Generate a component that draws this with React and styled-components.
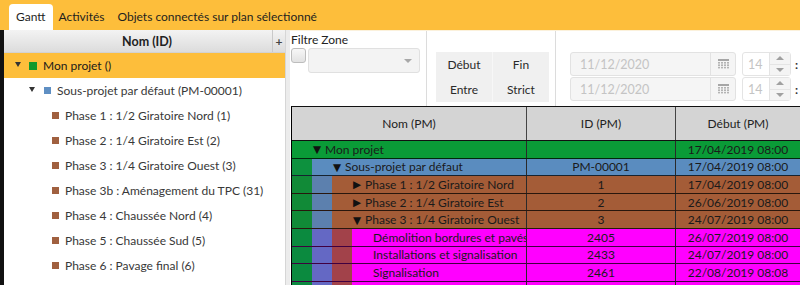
import React from 'react';
import styled, { createGlobalStyle } from 'styled-components';

const GlobalStyle = createGlobalStyle`
  html, body { margin: 0; padding: 0; background: #fff; }
  body { font-family: Lato, "Noto Sans", sans-serif; font-size: 12px; color: #222; }
`;

const Screen = styled.div`
  width: 800px;
  height: 285px;
  overflow: hidden;
  display: flex;
  flex-direction: column;
`;

const TabBar = styled.div`
  height: 30px;
  flex-shrink: 0;
  background: #fdbe3b;
  display: flex;
  align-items: flex-end;
  padding-left: 9px;
  box-sizing: border-box;
`;

const Tab = styled.div`
  height: 26px;
  padding: ${p => (p.$active ? '0 7px' : '0 7px 0 6px')};
  display: flex;
  align-items: center;
  padding-bottom: 1px;
  box-sizing: border-box;
  font-size: 12px;
  color: #1e1e1e;
  border-radius: 4px 4px 0 0;
  background: ${p => (p.$active ? '#fff' : 'transparent')};
`;

const Main = styled.div`
  flex: 1;
  min-height: 0;
  display: flex;
`;

const EdgeStrip = styled.div`
  width: 4px;
  background: #111;
`;

const TreePanel = styled.div`
  width: 281px;
  display: flex;
  flex-direction: column;
  background: #fff;
`;

const TreeHeader = styled.div`
  height: 23px;
  flex-shrink: 0;
  display: flex;
  box-sizing: border-box;
  background: linear-gradient(#f3f3f3, #dcdcdc);
  border-bottom: 1px solid #d2d2d2;
`;

const TreeTitle = styled.div`
  flex: 1;
  display: flex;
  align-items: center;
  justify-content: center;
  padding-left: 18px;
  font-weight: 700;
  font-size: 12.5px;
  color: #222;
`;

const AddCell = styled.div`
  width: 12px;
  border-left: 1px solid #c9c9c9;
  display: flex;
  align-items: center;
  justify-content: center;
  font-weight: 700;
  font-size: 12px;
  color: #444;
`;

const TreeRow = styled.div`
  height: 25px;
  flex-shrink: 0;
  display: flex;
  align-items: center;
  white-space: nowrap;
  padding-left: ${p => p.$indent}px;
  background: ${p => (p.$selected ? '#fdbe3b' : 'transparent')};
  font-size: 12px;
  color: ${p => (p.$selected ? '#1a1a1a' : '#383838')};
`;

const Caret = styled.span`
  width: 0;
  height: 0;
  border-left: 3.5px solid transparent;
  border-right: 3.5px solid transparent;
  border-top: 5px solid #333;
  margin-right: ${p => p.$gap}px;
  margin-top: -2px;
`;

const Swatch = styled.span`
  width: ${p => p.$size}px;
  height: ${p => p.$size}px;
  background: ${p => p.$color};
  margin-right: 6px;
  flex-shrink: 0;
`;

const Splitter = styled.div`
  width: 5px;
  background: #ececec;
  border-left: 1px solid #d6d6d6;
  box-sizing: border-box;
`;

const RightPanel = styled.div`
  flex: 1;
  min-width: 0;
  display: flex;
  flex-direction: column;
`;

const Toolbar = styled.div`
  height: 76px;
  flex-shrink: 0;
  display: flex;
  box-sizing: border-box;
  border-top: 1px solid #fbf1dc;
`;

const ZoneSection = styled.div`
  width: 137px;
  box-sizing: border-box;
  padding: 1px 0 0 1px;
  border-right: 1px solid #dcdcdc;
`;

const ZoneLabel = styled.div`
  font-size: 12px;
  line-height: 16px;
  color: #222;
`;

const ZoneRow = styled.div`
  display: flex;
  gap: 2px;
`;

const CheckBox = styled.div`
  width: 15px;
  height: 15px;
  box-sizing: border-box;
  border: 1px solid #bdbdbd;
  border-radius: 3px;
  background: linear-gradient(#f7f7f7, #e2e2e2);
`;

const Combo = styled.div`
  width: 112px;
  height: 25px;
  box-sizing: border-box;
  border: 1px solid #e0e0e0;
  border-radius: 3px;
  background: #f3f3f3;
  display: flex;
  align-items: center;
  justify-content: flex-end;
  padding-right: 7px;
`;

const DownArrow = styled.span`
  width: 0;
  height: 0;
  border-left: 4px solid transparent;
  border-right: 4px solid transparent;
  border-top: 4px solid #a8a8a8;
`;

const ModeSection = styled.div`
  width: 129px;
  box-sizing: border-box;
  padding: 21px 0 0 9px;
  border-right: 1px solid #dcdcdc;
`;

const ModeGrid = styled.div`
  width: 113px;
  display: grid;
  grid-template-columns: 56px 56px;
  grid-auto-rows: 25px;
  gap: 0 1px;
  background: #f7f7f7;
`;

const ModeButton = styled.div`
  background: #f0f0f0;
  display: flex;
  align-items: center;
  justify-content: center;
  font-size: 12px;
  color: #2a2a2a;
`;

const DateSection = styled.div`
  flex: 1;
  padding: 21px 0 0 14px;
  display: flex;
  flex-direction: column;
  gap: 1px;
`;

const DateRow = styled.div`
  display: flex;
  align-items: center;
  height: 24px;
`;

const DateInput = styled.div`
  width: 166px;
  height: 24px;
  box-sizing: border-box;
  border: 1px solid #e2e2e2;
  border-radius: 3px;
  background: #f5f5f5;
  display: flex;
`;

const DateText = styled.div`
  flex: 1;
  display: flex;
  align-items: center;
  padding-left: 9px;
  font-size: 12.5px;
  color: #c4c4c4;
`;

const CalButton = styled.div`
  width: 24px;
  border-left: 1px solid #e2e2e2;
  display: flex;
  align-items: center;
  justify-content: center;
`;

const Spinner = styled.div`
  width: 49px;
  height: 24px;
  margin-left: 6px;
  box-sizing: border-box;
  border: 1px solid #e4e4e4;
  border-radius: 3px;
  background: #fff;
  display: flex;
`;

const SpinValue = styled.div`
  flex: 1;
  display: flex;
  align-items: center;
  padding-left: 5px;
  font-size: 12.5px;
  color: #c4c4c4;
`;

const SpinArrows = styled.div`
  width: 20px;
  display: flex;
  flex-direction: column;
  background: #f4f4f4;
  border-left: 1px solid #e4e4e4;
`;

const SpinHalf = styled.div`
  flex: 1;
  display: flex;
  align-items: center;
  justify-content: center;
  border-bottom: ${p => (p.$top ? '1px solid #e4e4e4' : 'none')};
`;

const SpinTri = styled.span`
  width: 0;
  height: 0;
  border-left: 4px solid transparent;
  border-right: 4px solid transparent;
  ${p => (p.$up ? 'border-bottom: 4px solid #a0a0a0;' : 'border-top: 4px solid #a0a0a0;')}
`;

const Colon = styled.span`
  margin-left: 4px;
  font-size: 12px;
  font-weight: 700;
  color: #333;
`;

const Grid = styled.div`
  flex: 1;
  margin-left: 1px;
  border-left: 1px solid #000;
  border-top: 1px solid #111;
  overflow: hidden;
`;

const columns = '235px 149px 1fr';

const HeaderRow = styled.div`
  height: 33px;
  display: grid;
  grid-template-columns: ${columns};
  background: #d4d4d4;
  border-bottom: 1px solid #111;
`;

const HeaderCell = styled.div`
  display: flex;
  align-items: center;
  justify-content: center;
  font-size: 12px;
  color: #222;
  border-right: ${p => (p.$last ? 'none' : '1px solid #444')};
`;

const Row = styled.div`
  height: 17.6px;
  box-sizing: border-box;
  display: grid;
  grid-template-columns: ${columns};
  background: ${p => p.$bg};
  border-bottom: 1px solid rgba(0, 0, 0, 0.75);
`;

const NameCell = styled.div`
  display: flex;
  align-items: stretch;
  border-right: 1px solid #2a2a2a;
  overflow: hidden;
  white-space: nowrap;
`;

const Slot = styled.div`
  width: 20px;
  flex-shrink: 0;
  background: ${p => p.$color};
`;

const NameText = styled.div`
  display: flex;
  align-items: center;
  padding-left: 1px;
  font-size: 12px;
  color: #1a1a1a;
`;

const Toggle = styled.span`
  font-family: "DejaVu Sans", sans-serif;
  font-size: 10.5px;
  margin-right: 4px;
  color: #111;
`;

const DataCell = styled.div`
  display: flex;
  align-items: center;
  justify-content: center;
  font-size: 12px;
  color: #1a1a1a;
  border-right: ${p => (p.$last ? 'none' : '1px solid #2a2a2a')};
  white-space: nowrap;
`;

const GREEN = '#0a9b37';
const BLUE = '#5a8cbf';
const BROWN = '#a45c37';
const MAGENTA = '#ff00ff';

const treeItems = [
  { label: 'Mon projet ()', color: '#13992b', indent: 11, caret: true, size: 8, selected: true },
  { label: 'Sous-projet par défaut (PM-00001)', color: '#5f8fc3', indent: 25, caret: true, size: 7 },
  { label: 'Phase 1 : 1/2 Giratoire Nord (1)', color: '#a0603f', indent: 48, size: 7 },
  { label: 'Phase 2 : 1/4 Giratoire Est (2)', color: '#a0603f', indent: 48, size: 7 },
  { label: 'Phase 3 : 1/4 Giratoire Ouest (3)', color: '#a0603f', indent: 48, size: 7 },
  { label: 'Phase 3b : Aménagement du TPC (31)', color: '#a0603f', indent: 48, size: 7 },
  { label: 'Phase 4 : Chaussée Nord (4)', color: '#a0603f', indent: 48, size: 7 },
  { label: 'Phase 5 : Chaussée Sud (5)', color: '#a0603f', indent: 48, size: 7 },
  { label: 'Phase 6 : Pavage final (6)', color: '#a0603f', indent: 48, size: 7 },
];

const slotColors = {
  [BLUE]: ['rgba(10,145,55,0.95)'],
  [BROWN]: ['rgba(10,140,55,0.95)', 'rgba(88,130,180,0.95)'],
  [MAGENTA]: ['#0b8a3f', '#6468c4', '#a2424a'],
};

const ganttRows = [
  { name: 'Mon projet', toggle: '▼', bg: GREEN, id: '', start: '17/04/2019 08:00' },
  { name: 'Sous-projet par défaut', toggle: '▼', bg: BLUE, id: 'PM-00001', start: '17/04/2019 08:00' },
  { name: 'Phase 1 : 1/2 Giratoire Nord', toggle: '▶', bg: BROWN, id: '1', start: '17/04/2019 08:00' },
  { name: 'Phase 2 : 1/4 Giratoire Est', toggle: '▶', bg: BROWN, id: '2', start: '26/06/2019 08:00' },
  { name: 'Phase 3 : 1/4 Giratoire Ouest', toggle: '▼', bg: BROWN, id: '3', start: '24/07/2019 08:00' },
  { name: 'Démolition bordures et pavés', bg: MAGENTA, id: '2405', start: '26/07/2019 08:00' },
  { name: 'Installations et signalisation', bg: MAGENTA, id: '2433', start: '24/07/2019 08:00' },
  { name: 'Signalisation', bg: MAGENTA, id: '2461', start: '22/08/2019 08:08' },
  { name: '', bg: MAGENTA, id: '', start: '' },
];

const CalendarIcon = () => (
  <svg width="11" height="10" viewBox="0 0 11 10">
    <rect x="0" y="0" width="11" height="2" fill="#a6a6a6" />
    <g fill="#b4b4b4">
      {[0, 1, 2].map(r =>
        [0, 1, 2, 3].map(c => (
          <rect key={`${r}-${c}`} x={c * 3} y={3 + r * 2.4} width="2" height="1.6" />
        ))
      )}
    </g>
  </svg>
);

const DateLine = () => (
  <DateRow>
    <DateInput>
      <DateText>11/12/2020</DateText>
      <CalButton><CalendarIcon /></CalButton>
    </DateInput>
    <Spinner>
      <SpinValue>14</SpinValue>
      <SpinArrows>
        <SpinHalf $top><SpinTri $up /></SpinHalf>
        <SpinHalf><SpinTri /></SpinHalf>
      </SpinArrows>
    </Spinner>
    <Colon>:</Colon>
  </DateRow>
);

export default function App() {
  return (
    <Screen>
      <GlobalStyle />
      <TabBar>
        <Tab $active>Gantt</Tab>
        <Tab>Activités</Tab>
        <Tab>Objets connectés sur plan sélectionné</Tab>
      </TabBar>
      <Main>
        <EdgeStrip />
        <TreePanel>
          <TreeHeader>
            <TreeTitle>Nom (ID)</TreeTitle>
            <AddCell>+</AddCell>
          </TreeHeader>
          {treeItems.map(item => (
            <TreeRow key={item.label} $indent={item.indent} $selected={item.selected}>
              {item.caret && <Caret $gap={item.size === 8 ? 8 : 9} />}
              <Swatch $color={item.color} $size={item.size} />
              {item.label}
            </TreeRow>
          ))}
        </TreePanel>
        <Splitter />
        <RightPanel>
          <Toolbar>
            <ZoneSection>
              <ZoneLabel>Filtre Zone</ZoneLabel>
              <ZoneRow>
                <CheckBox />
                <Combo><DownArrow /></Combo>
              </ZoneRow>
            </ZoneSection>
            <ModeSection>
              <ModeGrid>
                <ModeButton>Début</ModeButton>
                <ModeButton>Fin</ModeButton>
                <ModeButton>Entre</ModeButton>
                <ModeButton>Strict</ModeButton>
              </ModeGrid>
            </ModeSection>
            <DateSection>
              <DateLine />
              <DateLine />
            </DateSection>
          </Toolbar>
          <Grid>
            <HeaderRow>
              <HeaderCell>Nom (PM)</HeaderCell>
              <HeaderCell>ID (PM)</HeaderCell>
              <HeaderCell $last>Début (PM)</HeaderCell>
            </HeaderRow>
            {ganttRows.map((row, i) => (
              <Row key={i} $bg={row.bg}>
                <NameCell>
                  {(slotColors[row.bg] || []).map((c, j) => (
                    <Slot key={j} $color={c} />
                  ))}
                  <Slot $color="transparent" />
                  <NameText>
                    {row.toggle && <Toggle>{row.toggle}</Toggle>}
                    {row.name}
                  </NameText>
                </NameCell>
                <DataCell>{row.id}</DataCell>
                <DataCell $last>{row.start}</DataCell>
              </Row>
            ))}
          </Grid>
        </RightPanel>
      </Main>
    </Screen>
  );
}
